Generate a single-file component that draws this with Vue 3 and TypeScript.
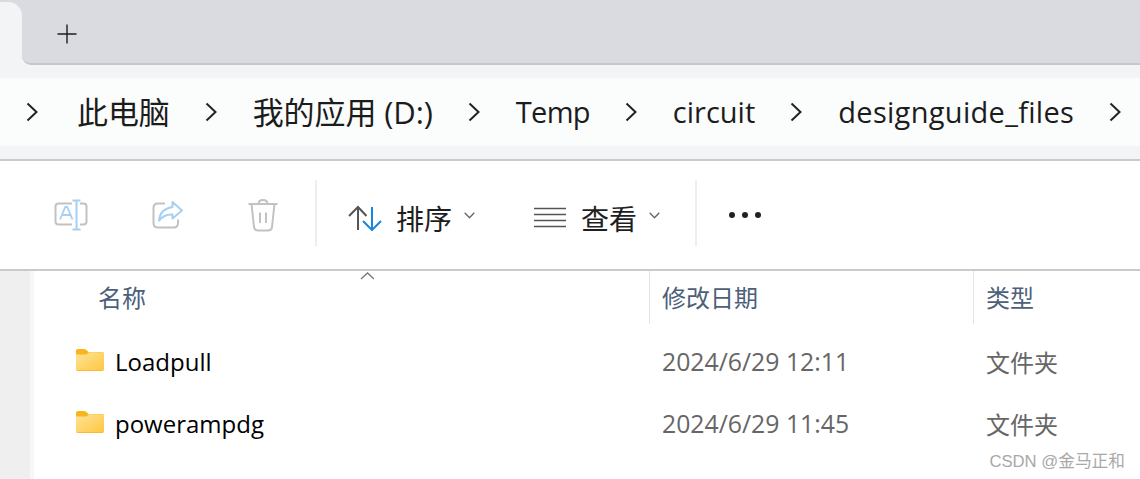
<script setup lang="ts">
interface Crumb { label: string; kind: string }
const crumbs: Crumb[] = [
  { label: '此电脑', kind: 'cjk' },
  { label: '我的应用 (D:)', kind: 'cjk' },
  { label: 'Temp', kind: 'tight' },
  { label: 'circuit', kind: '' },
  { label: 'designguide_files', kind: 'wide' },
]
const rows = [
  { name: 'Loadpull', date: '2024/6/29 12:11', type: '文件夹' },
  { name: 'powerampdg', date: '2024/6/29 11:45', type: '文件夹' },
]
</script>

<template>
  <div class="win">
    <div class="strip">
      <div class="tab"></div>
      <div class="tabbar">
        <svg class="plus" width="20" height="20" viewBox="0 0 20 20"><path d="M10 0.500V19.500M0.500 10H19.500" stroke="#1e1e1e" stroke-width="1.400" fill="none" /></svg>
      </div>
    </div>
    <div class="addr-wrap">
      <nav class="addr">
        <template v-for="c in crumbs" :key="c.label">
          <svg class="chev" width="12" height="20" viewBox="0 0 12 20"><path d="M1.500 1.500L10.500 10L1.500 18.500" stroke="#222" stroke-width="2" fill="none" /></svg>
          <span class="crumb" :class="c.kind">{{ c.label }}</span>
        </template>
        <svg class="chev" width="12" height="20" viewBox="0 0 12 20"><path d="M1.500 1.500L10.500 10L1.500 18.500" stroke="#222" stroke-width="2" fill="none" /></svg>
      </nav>
    </div>
    <div class="toolbar">
      <svg class="ic i1" width="34" height="32" viewBox="0 0 34 32">
        <path d="M18 4.500H4.500Q1.500 4.500 1.500 7.500V22.500Q1.500 25.500 4.500 25.500H18M26 4.500H29.500Q32.500 4.500 32.500 7.500V22.500Q32.500 25.500 29.500 25.500H26" fill="none" stroke="#c2c2c2" stroke-width="2" />
        <path d="M6 20.500L11.300 8H13.200L18.500 20.500M8 16H16.500" fill="none" stroke="#a6d0f2" stroke-width="1.800" />
        <path d="M18.500 1.500H26.500M22.500 1.500V30.500M18.500 30.500H26.500" fill="none" stroke="#a6d0f2" stroke-width="2" />
      </svg>
      <svg class="ic i2" width="32" height="30" viewBox="0 0 32 30">
        <path d="M13 3.500H6Q1.500 3.500 1.500 8V23Q1.500 27.500 6 27.500H21.500Q26 27.500 26 23V19.500" fill="none" stroke="#c2c2c2" stroke-width="2" />
        <path d="M20.500 2L30 10.500L20.500 18.500V14.500Q12.500 14 7 20.500Q8 9 20.500 7Z" fill="none" stroke="#a6d0f2" stroke-width="2" stroke-linejoin="round" />
      </svg>
      <svg class="ic i3" width="30" height="33" viewBox="0 0 30 33">
        <path d="M0.500 5H29.500M10.500 5Q10.500 1 15 1Q19.500 1 19.500 5M3.500 5L6 28Q6.500 31.500 10 31.500H20Q23.500 31.500 24 28L26.500 5M12 13.500V24M18 13.500V24" fill="none" stroke="#c2c2c2" stroke-width="2" />
      </svg>
      <div class="tb-sep sep1"></div>
      <svg class="ic i4" width="34" height="26" viewBox="0 0 34 26">
        <path d="M1 11L10 2L18.500 11M10 2V25" fill="none" stroke="#555" stroke-width="2" />
        <path d="M15 16L24 25L33 16M24 25V2" fill="none" stroke="#1a86dc" stroke-width="2" />
      </svg>
      <span class="tb-label l1">排序</span>
      <svg class="mini m1" width="11" height="7" viewBox="0 0 11 7"><path d="M0.700 0.700L5.500 5.700L10.300 0.700" fill="none" stroke="#666" stroke-width="1.300" /></svg>
      <svg class="ic i5" width="32" height="21" viewBox="0 0 32 21">
        <path d="M0 1.500H32M0 7.500H32M0 13.500H32M0 19.500H32" fill="none" stroke="#555" stroke-width="1.700" />
      </svg>
      <span class="tb-label l2">查看</span>
      <svg class="mini m2" width="11" height="7" viewBox="0 0 11 7"><path d="M0.700 0.700L5.500 5.700L10.300 0.700" fill="none" stroke="#666" stroke-width="1.300" /></svg>
      <div class="tb-sep sep2"></div>
      <div class="dots"><i></i><i></i><i></i></div>
    </div>
    <div class="content">
      <div class="gutter"></div>
      <div class="list">
        <div class="head">
          <div class="hc h-name">名称</div>
          <div class="hc h-date">修改日期</div>
          <div class="hc h-type">类型</div>
        </div>
        <div v-for="r in rows" :key="r.name" class="row">
          <div class="cell-name">
            <svg class="folder" width="28" height="22" viewBox="0 0 28 22">
              <defs>
                <linearGradient id="fg" x1="0" y1="0" x2="1" y2="1">
                  <stop offset="0" stop-color="#ffe39a" />
                  <stop offset="1" stop-color="#fdc83f" />
                </linearGradient>
              </defs>
              <path d="M0 2Q0 0 2 0H8Q10 0 11 1.500L12.500 3H26Q28 3 28 5V20Q28 22 26 22H2Q0 22 0 20Z" fill="#f8b51c" />
              <path d="M0 5.500H10.500L13 3.300H27Q28 3.300 28 5V20Q28 21.200 26.500 21.200H1.500Q0 21.200 0 20Z" fill="url(#fg)" />
            </svg>
            <span>{{ r.name }}</span>
          </div>
          <div class="cell-date">{{ r.date }}</div>
          <div class="cell-type">{{ r.type }}</div>
        </div>
      </div>
      <svg class="caret" width="15" height="8" viewBox="0 0 15 8"><path d="M1 7L7.500 1L14 7" fill="none" stroke="#777" stroke-width="1.300" /></svg>
      <div class="mark">CSDN @金马正和</div>
    </div>
  </div>
</template>

<style>
html, body { margin: 0; background: #fff; }
</style>

<style scoped>
.win {
  width: 1140px;
  height: 479px;
  overflow: hidden;
  display: flex;
  flex-direction: column;
  font-family: "Open Sans", "Noto Sans CJK SC", sans-serif;
  background: #fff;
}
.strip { height: 65px; display: flex; background: #d9dbe0; flex: none; box-shadow: inset 0 -12px 0 #f3f4f6; }
.tab { width: 22px; background: #f3f4f6; border-radius: 0 14px 0 0; margin-top: 2px; }
.tabbar {
  flex: 1;
  background: #d9dbe0;
  border-bottom: 2px solid #c6c7cb;
  border-radius: 0 0 0 9px;
  display: flex;
  align-items: center;
  padding-left: 35px;
}
.plus { margin-top: 4px; }
.addr-wrap { height: 94px; background: #f3f4f6; padding-top: 13px; box-sizing: border-box; flex: none; }
.addr {
  height: 68px;
  background: #fbfcfc;
  display: flex;
  align-items: center;
  padding-left: 26px;
  white-space: nowrap;
}
.chev { flex: none; margin: 0 36px 0 35px; }
.chev:first-child { margin: 0 39px 0 0; }
.crumb { font-size: 29px; color: #1c1c1c; line-height: 68px; }
.crumb.cjk { font-size: 31px; letter-spacing: -0.1px; }
.crumb.tight { letter-spacing: -0.7px; }
.crumb.wide { letter-spacing: 0.3px; }
.toolbar {
  height: 112px;
  flex: none;
  box-sizing: border-box;
  border-top: 2px solid #c9c9ce;
  border-bottom: 2px solid #c9c9ce;
  display: flex;
  align-items: center;
  padding-left: 54px;
}
.ic { flex: none; }
.i2 { margin-left: 64px; }
.i3 { margin-left: 64px; }
.tb-sep { width: 2px; height: 66px; background: #eeeeee; flex: none; margin-top: -4px; }
.sep1 { margin-left: 37px; }
.i4 { margin-left: 31px; margin-top: 5px; }
.tb-label { font-size: 28px; color: #1e1e1e; margin-left: 14px; line-height: 40px; margin-top: 8px; }
.l2 { margin-left: 15px; }
.mini { margin-left: 12px; margin-top: 1px; flex: none; }
.i5 { margin-left: 59px; margin-top: 5px; }
.sep2 { margin-left: 35px; }
.dots { display: flex; gap: 7px; margin-left: 32px; }
.dots i { width: 6px; height: 6px; border-radius: 50%; background: #222; display: block; }
.content { flex: 1; display: flex; position: relative; min-height: 0; }
.gutter {
  width: 30px;
  background: #efefef;
  border-right: 4px solid #f7f7f7;
  flex: none;
}
.list { flex: 1; }
.head { height: 51px; display: grid; grid-template-columns: 615px 324px 1fr; }
.hc {
  font-size: 24px;
  color: #4c607a;
  line-height: 53px;
  box-sizing: border-box;
}
.h-name { padding-left: 64px; }
.h-date, .h-type { border-left: 1px solid #e4e4e4; padding-left: 12px; }
.row {
  height: 62px;
  display: grid;
  grid-template-columns: 615px 324px 1fr;
  align-items: center;
  font-size: 24px;
}
.head + .row { margin-top: 8px; }
.cell-name { display: flex; align-items: center; color: #000; padding-left: 42px; }
.folder { flex: none; margin-right: 11px; margin-top: -2px; }
.cell-date { font-size: 24.800px; }
.cell-date, .cell-type { color: #666; padding-left: 13px; }
.caret { position: absolute; left: 360px; top: 1px; }
.mark {
  position: absolute;
  right: 15px;
  bottom: 7px;
  font-size: 16.700px;
  color: #a8a8a8;
  font-family: "Liberation Sans", "Noto Sans CJK SC", sans-serif;
  line-height: 20px;
}
</style>
